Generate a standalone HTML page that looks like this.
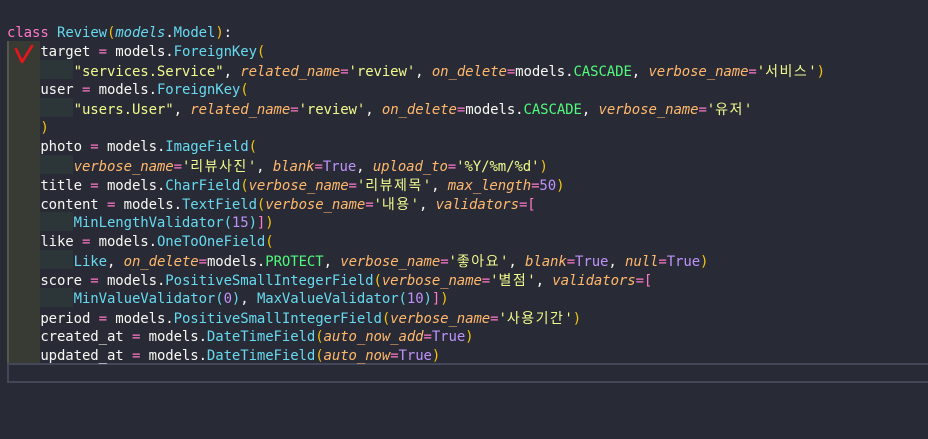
<!DOCTYPE html>
<html><head><meta charset="utf-8"><style>
html,body{margin:0;padding:0;width:928px;height:439px;background:#282a36;overflow:hidden}
.ed{position:absolute;left:7px;top:24px;font-family:"DejaVu Sans Mono","Liberation Mono","Noto Sans CJK KR",monospace;font-size:14px;line-height:19px;color:#f8f8f2;letter-spacing:-0.1px}
.l{height:19px;position:relative;white-space:pre}
.g1{position:absolute;left:7px;top:41px;width:33px;height:323px;background:#383a34;border-left:2px solid #55574f;box-sizing:border-box}
.g2{position:absolute;left:40px;width:33px;height:19px;background:#2c3538}
.cur{position:absolute;left:7px;top:363px;width:930px;height:20px;border:2px solid #44475a;box-sizing:border-box}
.k{color:#ff79c6}.c{color:#66d9ef}.i{font-style:italic}.a{color:#ffb86c;font-style:italic}
.s{color:#f1fa8c}.p{color:#bd93f9}.g{color:#50fa7b}.y{color:#f1c40f}.e{color:#ff79c6}
.ko{font-family:"Noto Sans CJK KR",sans-serif;letter-spacing:1.5px}
</style></head><body>
<div class="g1"></div>
<div class="g2" style="top:60px"></div>
<div class="g2" style="top:98px"></div>
<div class="g2" style="top:155px"></div>
<div class="g2" style="top:212px"></div>
<div class="g2" style="top:250px"></div>
<div class="g2" style="top:288px"></div>
<div class="cur"></div>
<div class="ed"><div class="l"><span class="k">class</span> <span class="c">Review</span><span class="y">(</span><span class="c i">models</span>.<span class="c">Model</span><span class="y">)</span>:</div><div class="l">    target <span class="e">=</span> models.<span class="c">ForeignKey</span><span class="y">(</span></div><div class="l">        <span class="s">"services.Service"</span>, <span class="a">related_name</span><span class="e">=</span><span class="s">'review'</span>, <span class="a">on_delete</span><span class="e">=</span>models.<span class="g">CASCADE</span>, <span class="a">verbose_name</span><span class="e">=</span><span class="s">'<span class="ko">서비스</span>'</span><span class="y">)</span></div><div class="l">    user <span class="e">=</span> models.<span class="c">ForeignKey</span><span class="y">(</span></div><div class="l">        <span class="s">"users.User"</span>, <span class="a">related_name</span><span class="e">=</span><span class="s">'review'</span>, <span class="a">on_delete</span><span class="e">=</span>models.<span class="g">CASCADE</span>, <span class="a">verbose_name</span><span class="e">=</span><span class="s">'<span class="ko">유저</span>'</span></div><div class="l">    <span class="y">)</span></div><div class="l">    photo <span class="e">=</span> models.<span class="c">ImageField</span><span class="y">(</span></div><div class="l">        <span class="a">verbose_name</span><span class="e">=</span><span class="s">'<span class="ko">리뷰사진</span>'</span>, <span class="a">blank</span><span class="e">=</span><span class="p">True</span>, <span class="a">upload_to</span><span class="e">=</span><span class="s">'%Y/%m/%d'</span><span class="y">)</span></div><div class="l">    title <span class="e">=</span> models.<span class="c">CharField</span><span class="y">(</span><span class="a">verbose_name</span><span class="e">=</span><span class="s">'<span class="ko">리뷰제목</span>'</span>, <span class="a">max_length</span><span class="e">=</span><span class="p">50</span><span class="y">)</span></div><div class="l">    content <span class="e">=</span> models.<span class="c">TextField</span><span class="y">(</span><span class="a">verbose_name</span><span class="e">=</span><span class="s">'<span class="ko">내용</span>'</span>, <span class="a">validators</span><span class="e">=[</span></div><div class="l">        <span class="c">MinLengthValidator</span><span class="c">(</span><span class="p">15</span><span class="c">)</span><span class="e">]</span><span class="y">)</span></div><div class="l">    like <span class="e">=</span> models.<span class="c">OneToOneField</span><span class="y">(</span></div><div class="l">        <span class="c">Like</span>, <span class="a">on_delete</span><span class="e">=</span>models.<span class="g">PROTECT</span>, <span class="a">verbose_name</span><span class="e">=</span><span class="s">'<span class="ko">좋아요</span>'</span>, <span class="a">blank</span><span class="e">=</span><span class="p">True</span>, <span class="a">null</span><span class="e">=</span><span class="p">True</span><span class="y">)</span></div><div class="l">    score <span class="e">=</span> models.<span class="c">PositiveSmallIntegerField</span><span class="y">(</span><span class="a">verbose_name</span><span class="e">=</span><span class="s">'<span class="ko">별점</span>'</span>, <span class="a">validators</span><span class="e">=[</span></div><div class="l">        <span class="c">MinValueValidator</span><span class="c">(</span><span class="p">0</span><span class="c">)</span>, <span class="c">MaxValueValidator</span><span class="c">(</span><span class="p">10</span><span class="c">)</span><span class="e">]</span><span class="y">)</span></div><div class="l">    period <span class="e">=</span> models.<span class="c">PositiveSmallIntegerField</span><span class="y">(</span><span class="a">verbose_name</span><span class="e">=</span><span class="s">'<span class="ko">사용기간</span>'</span><span class="y">)</span></div><div class="l">    created_at <span class="e">=</span> models.<span class="c">DateTimeField</span><span class="y">(</span><span class="a">auto_now_add</span><span class="e">=</span><span class="p">True</span><span class="y">)</span></div><div class="l">    updated_at <span class="e">=</span> models.<span class="c">DateTimeField</span><span class="y">(</span><span class="a">auto_now</span><span class="e">=</span><span class="p">True</span><span class="y">)</span></div></div>
<svg style="position:absolute;left:12px;top:43px" width="24" height="22"><path d="M4 6 L10 19 L20 3" fill="none" stroke="#e8161b" stroke-width="2.6" stroke-linecap="round" stroke-linejoin="round"/></svg>
</body></html>
